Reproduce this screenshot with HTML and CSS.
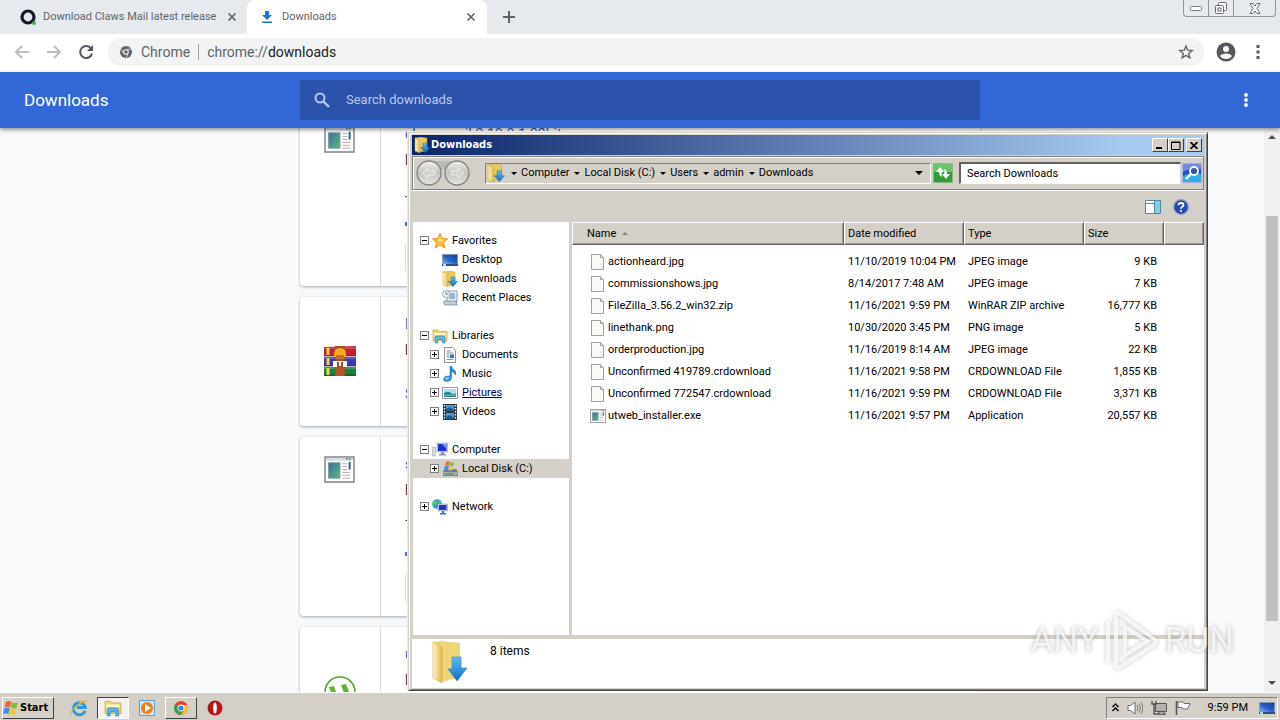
FILE: index.html
```html
<!DOCTYPE html>
<html lang="en">
<head>
<meta charset="utf-8">
<title>Downloads</title>
<link rel="stylesheet" href="styles.css">
</head>
<body>
<svg class="defs" aria-hidden="true">
  <defs>
    <linearGradient id="gFold" x1="0" x2="1"><stop offset="0" stop-color="#fff6c0"/><stop offset="1" stop-color="#e3b949"/></linearGradient>
    <linearGradient id="gBlue" x1="0" x2="0" y1="0" y2="1"><stop offset="0" stop-color="#5cc0f5"/><stop offset="1" stop-color="#0c6cc4"/></linearGradient>
    <linearGradient id="gScreen" x1="0" x2="1" y1="1" y2="0"><stop offset="0" stop-color="#6db7ee"/><stop offset=".45" stop-color="#2a62c8"/><stop offset="1" stop-color="#16399a"/></linearGradient>
    <linearGradient id="gExe" x1="0" x2="1" y1="0" y2="1"><stop offset="0" stop-color="#3d6f9c"/><stop offset="1" stop-color="#5cb878"/></linearGradient>
    <linearGradient id="gNav" x1="0" x2="0" y1="0" y2="1"><stop offset="0" stop-color="#f0f0ee"/><stop offset=".5" stop-color="#c2c2bf"/><stop offset="1" stop-color="#e6e6e3"/></linearGradient>
  </defs>
  <symbol id="folder-down" viewBox="0 0 16 16"><path d="M1 1l5-1 7 1v13l-8 1z" fill="#ecc95c" stroke="#c69b32" stroke-width=".5"/><path d="M1 1l5 2v13l-5-2z" fill="url(#gFold)" stroke="#cfa63c" stroke-width=".5"/><path d="M9 6h4v4.500h2.500L11 15.500 6.500 10.500H9z" fill="url(#gBlue)" stroke="#1b6fb8" stroke-width=".5"/></symbol>
  <symbol id="folder-lib" viewBox="0 0 16 16"><path d="M1 2h5l1 1.500h8V13H1z" fill="#f2d675" stroke="#c9a13a" stroke-width=".7"/><path d="M2 5h12v2H2z" fill="#fff7cf"/><path d="M3 15v-5q0-2 2-2h6q2 0 2 2v5h-2.500v-3.500h-5V15z" fill="#57b4ea" stroke="#2980bd" stroke-width=".6"/></symbol>
  <symbol id="star" viewBox="0 0 16 16"><path d="M8 .5l2.200 5 5.300.4-4 3.600 1.300 5.500L8 12l-4.800 3 1.300-5.500-4-3.600 5.300-.4z" fill="#fdbf35" stroke="#e08a17" stroke-width=".9"/><path d="M8 2.500l1.300 4 3.700.3-5 1.700-3-1.500 2-.5z" fill="#ffe48c"/></symbol>
  <symbol id="desktop" viewBox="0 0 16 16"><path d="M0 2h16v12H0z" fill="#9aa7b5"/><path d="M.8 2.800h14.400v9H.8z" fill="url(#gScreen)"/><path d="M0 12h16v2H0z" fill="#2a4f86"/><path d="M1 12h3v2H1z" fill="#a9dcf5"/></symbol>
  <symbol id="recent" viewBox="0 0 16 16"><path d="M5 1h10v11H5z" fill="#e9f0f6" stroke="#71879b" stroke-width=".8"/><path d="M2 11h12l1 4H3q-2-1-1-4z" fill="#c2cfda" stroke="#6e8194" stroke-width=".7"/><circle cx="4" cy="4" r="3.500" fill="#f4f6f8" stroke="#8b98a5" stroke-width=".8"/><path d="M4 2v2h2M8 4h5M8 6h5M7 8h6" stroke="#3f7fb6" fill="none"/></symbol>
  <symbol id="doc" viewBox="0 0 16 16"><path d="M2.500.5h8l3 3v12h-11z" fill="#fff" stroke="#8c949c"/><path d="M4.500 4h4M4.500 6h7M4.500 8h3M4.500 10h3M4.500 12.500h7" stroke="#7d8fa3"/><path d="M8 7.500h4V11H8z" fill="#2f74b5"/></symbol>
  <symbol id="music" viewBox="0 0 16 16"><path d="M8 0h1.500q.5 3 3 4 2 1.500 1 5-1-3-4-3.500V12q0 3-4 3.500-4 0-4-2.500.5-3 4.500-3 1 0 2 .3z" fill="#2f93dc" stroke="#1769ae" stroke-width=".5"/><ellipse cx="5" cy="12.500" rx="1.800" ry="1" fill="#a6dcfa"/></symbol>
  <symbol id="picture" viewBox="0 0 16 16"><path d="M.5 2.500h15v11H.5z" fill="#fff" stroke="#8d99a3"/><path d="M2 4h12v8H2z" fill="#a6dcf5"/><path d="M2 8q4-2 7 0t5 0v4H2z" fill="#2f8079"/><path d="M2 9.500h12V11H2z" fill="#56b4d3"/></symbol>
  <symbol id="video" viewBox="0 0 16 16"><path d="M1 0h14v16H1z" fill="#32363b"/><path d="M4 1h8v6H4zM4 9h8v6H4z" fill="#4d9bd6"/><path d="M4 5l4-2 4 3v1H4zM4 13l4-2 4 3v1H4z" fill="#1d5b97"/><path d="M2.500 1v15M13.500 1v15" stroke="#fff" stroke-width="1.300" stroke-dasharray="1.500 1.500"/></symbol>
  <symbol id="computer" viewBox="0 0 16 16"><path d="M5 1h10.500v9H5z" fill="#cfd6dd" stroke="#8d97a2" stroke-width=".6"/><path d="M6 2h8.500v7H6z" fill="#1c32c4"/><path d="M10 2h4.500v5z" fill="#7b98f2"/><path d="M9 10h3v2h2v1.500H7V12h2z" fill="#8b96a5"/><path d="M.7 5h2.600v9H.7z" fill="#e0e3e6" stroke="#8e959c" stroke-width=".6"/></symbol>
  <symbol id="disk" viewBox="0 0 16 16"><path d="M1 10l2-2h11l2 3v4H1z" fill="#71808a"/><path d="M1.500 11h14v3h-14z" fill="#a3aeb5"/><path d="M3 12h9v1.500H3z" fill="#49a35f"/><path d="M4 1q2-1.500 4 0L7 4.500q-2-1-4 0z" fill="#ef6a2f"/><path d="M8.500 1q2 1.200 4 0l-1 3.500q-2 1-4 0z" fill="#83c043"/><path d="M3 5q2-1 4 0L6 8.500q-2-1-4 0z" fill="#3f93dd"/><path d="M7.500 5.200q2 1.200 4 0l-1 3.500q-2 1-4 0z" fill="#fbc52d"/></symbol>
  <symbol id="network" viewBox="0 0 16 16"><circle cx="5" cy="5" r="4.800" fill="#2f9ed8"/><path d="M2 2q3-1 3 1T2 6 1 3zM6 1l3 2-2 2z" fill="#60c55d"/><path d="M6 5h9.500v7H6z" fill="#d3dae2" stroke="#7d8ea6" stroke-width=".6"/><path d="M7 6h7.500v5H7z" fill="#1d36cc"/><path d="M10 12h2v2h2v1.500H8V14h2z" fill="#3c6fc2"/></symbol>
  <symbol id="flag" viewBox="0 0 16 16"><path d="M3 2q3-1.800 5.300 0L7 7.500Q4.500 6 1.500 7.500z" fill="#f0642b"/><path d="M9 2.300q3 1.500 6 0L13.500 8q-3 1.200-5.800-.3z" fill="#7fbd3c"/><path d="M1.200 8.500q3-1.500 5.500 0L5.400 14Q3 12.500 0 14z" fill="#3a8fe0"/><path d="M7.400 8.800q3 1.500 6 0L12 14.300q-3 1.300-5.800-.2z" fill="#fcc42a"/></symbol>
  <symbol id="page" viewBox="0 0 16 16"><path d="M1.500.5h9l3 3v12h-12z" fill="#f9f9f8" stroke="#a09f9d"/><path d="M10.500.5v3h3" fill="#dcdcda" stroke="#a09f9d"/></symbol>
  <symbol id="exe" viewBox="0 0 32 28"><path d="M1 1h30v26H1z" fill="#fdfdfd" stroke="#7d8389" stroke-width="1.500"/><path d="M2 2h28v3H2z" fill="#d9dde0"/><path d="M23 3h1.500M26 3h1.500" stroke="#33475b" stroke-width="1.500"/><path d="M4.500 7h12v16h-12z" fill="url(#gExe)" stroke="#7f9aa8"/><path d="M19 8h5M19 11h5M19 14h5M19 17h8M19 20h8M19 23h8" stroke="#b5a9ae"/><path d="M26.500 6v8" stroke="#1f6678" stroke-width="2"/></symbol>
  <symbol id="rar" viewBox="0 0 32 30"><path d="M0 1l32-1v10H0z" fill="#c51f35"/><path d="M0 11h32v9H0z" fill="#3d39bb"/><path d="M0 21h32v9H0z" fill="#1a8238"/><path d="M0 2h32M0 12h32M0 22h32" stroke="#fff" stroke-opacity=".35"/><path d="M0 10h32M0 20h32M0 29h32" stroke="#1d1b2c" stroke-opacity=".6"/><path d="M4 2v7M4 12v7M4 22v7" stroke="#f5d23e" stroke-width="3"/><path d="M11 0h10v30H11z" fill="#a24f2a"/><path d="M10 8q0-6 6-6t6 6v3H10z" fill="#f3ab1c"/><path d="M12 9h8v4h-8z" fill="#c86d25"/><path d="M9 15h14v6h-4v-5h-2v4h-2v-4h-2v5H9z" fill="#fff"/><path d="M12 21h8v9h-8z" fill="#b4532c"/></symbol>
  <symbol id="chrome" viewBox="0 0 16 16"><circle cx="8" cy="8" r="7" fill="#e8402f"/><path d="M8 8L1.900 4.500A7 7 0 0 0 8 15l3-5.300z" fill="#31a452"/><path d="M8 8h0l3 1.800L8 15a7 7 0 0 0 6.300-10H8z" fill="#fbc41e"/><circle cx="8" cy="8" r="3.400" fill="#fff"/><circle cx="8" cy="8" r="2.600" fill="#3e7fe8"/></symbol>
</svg>

<div class="desktop">
  <main class="browser">
    <div class="tabstrip">
      <div class="tab">
        <svg class="i16" viewBox="0 0 16 16"><circle cx="8" cy="8" r="6" fill="none" stroke="#15182a" stroke-width="3.200"/><circle cx="14" cy="14" r="2" fill="#35b34a"/></svg>
        <span class="tab-title">Download Claws Mail latest release</span>
        <button class="plain" aria-label="Close tab"><svg class="i10" viewBox="0 0 10 10"><path d="M1.500 1.500l7 7M8.500 1.500l-7 7" stroke="#5f6368" stroke-width="1.700"/></svg></button>
      </div>
      <div class="tab active">
        <svg class="i16" viewBox="0 0 16 16"><path d="M6 2h4v4h3L8 11 3 6h3zM3 12.500h10V14H3z" fill="#1a73e8"/></svg>
        <span class="tab-title">Downloads</span>
        <button class="plain" aria-label="Close tab"><svg class="i10" viewBox="0 0 10 10"><path d="M1.500 1.500l7 7M8.500 1.500l-7 7" stroke="#5f6368" stroke-width="1.700"/></svg></button>
      </div>
      <button class="plain new-tab" aria-label="New tab"><svg class="i12" viewBox="0 0 12 12"><path d="M6 0v12M0 6h12" stroke="#5f6368" stroke-width="2"/></svg></button>
      <div class="winctl">
        <button aria-label="Minimize"><svg width="12" height="5" viewBox="0 0 12 5"><rect x=".5" y=".5" width="11" height="4" rx="1" fill="#fff" stroke="#777c84"/></svg></button>
        <button aria-label="Restore"><svg width="14" height="13" viewBox="0 0 14 13"><rect x="4.500" y=".5" width="8" height="8" rx="1" fill="#fff" stroke="#666b73"/><rect x="1.500" y="3.500" width="8" height="8" rx="1" fill="#fff" stroke="#666b73"/><rect x="4" y="6" width="3" height="3" fill="#fff" stroke="#666b73"/></svg></button>
        <button class="wide" aria-label="Close"><svg width="12" height="11" viewBox="0 0 12 11"><path d="M1 .5h3l2 2.500 2-2.500h3L8 5.500l3 5H8L6 8l-2 2.500H1l3-5z" fill="#fff" stroke="#666b73"/></svg></button>
      </div>
    </div>
    <div class="toolbar">
      <button class="plain" aria-label="Back"><svg class="i16" viewBox="0 0 16 16"><path d="M15 8H2M8 2L2 8l6 6" fill="none" stroke="#babcbe" stroke-width="2"/></svg></button>
      <button class="plain" aria-label="Forward"><svg class="i16" viewBox="0 0 16 16"><path d="M1 8h13M8 2l6 6-6 6" fill="none" stroke="#babcbe" stroke-width="2"/></svg></button>
      <button class="plain" aria-label="Reload"><svg class="i16" viewBox="0 0 16 16"><path d="M13 4.500A6 6 0 1 0 14 9.500" fill="none" stroke="#54585d" stroke-width="2"/><path d="M15 1v6H9z" fill="#54585d"/></svg></button>
      <div class="omnibox">
        <svg class="i12" viewBox="0 0 12 12"><circle cx="6" cy="6" r="6" fill="#5f6368"/><circle cx="6" cy="6" r="2.300" fill="#5f6368" stroke="#eef0f2" stroke-width="1.100"/><path d="M6 3.300h5.300M3.500 7.300L1 3M8.300 7.300L6 11.500" stroke="#eef0f2" stroke-width=".8"/></svg>
        <span class="site">Chrome</span><span class="bar"></span>
        <span class="url">chrome://<b>downloads</b></span>
        <button class="plain" aria-label="Bookmark"><svg class="i16" viewBox="0 0 16 16"><path d="M8 2l1.700 4.200 4.500.3-3.500 2.900 1.200 4.400L8 11.400l-3.900 2.400 1.200-4.400-3.500-2.900 4.500-.3z" fill="none" stroke="#5f6368" stroke-width="1.400"/></svg></button>
      </div>
      <button class="plain" aria-label="Profile"><svg width="20" height="20" viewBox="0 0 20 20"><circle cx="10" cy="10" r="9.500" fill="#54585d"/><circle cx="10" cy="7" r="3" fill="#fff"/><path d="M4 14q1.500-2.600 6-2.600t6 2.600q-2 3-6 3t-6-3z" fill="#fff"/></svg></button>
      <button class="plain menu" aria-label="Menu"><svg width="4" height="14" viewBox="0 0 4 14"><path d="M.5 0h3v3h-3zM.5 5.500h3v3h-3zM.5 11h3v3h-3z" fill="#54585d"/></svg></button>
    </div>
    <header class="app-head">
      <h1>Downloads</h1>
      <label class="app-search"><svg class="i16" viewBox="0 0 16 16"><circle cx="6" cy="6" r="4.500" fill="none" stroke="#b9c9f0" stroke-width="2"/><path d="M9.500 9.500L15 15" stroke="#b9c9f0" stroke-width="2.400"/></svg><input type="text" placeholder="Search downloads" aria-label="Search downloads"></label>
      <button class="plain more" aria-label="More actions"><svg width="4" height="14" viewBox="0 0 4 14"><circle cx="2" cy="2" r="1.900" fill="#fff"/><circle cx="2" cy="7" r="1.900" fill="#fff"/><circle cx="2" cy="12" r="1.900" fill="#fff"/></svg></button>
    </header>
    <div class="page">
      <div class="cards">
        <article class="card">
          <div class="thumb"><svg width="31" height="27"><use href="#exe"/></svg></div>
          <div class="info"><a href="#">claws-mail-3.19.0-1-32bit.exe</a><p>h</p><p class="state">-</p><i class="prog"></i><button>P</button></div>
        </article>
        <article class="card short">
          <div class="thumb rar"><svg width="32" height="30"><use href="#rar"/></svg></div>
          <div class="info"><a href="#">F</a><p>h</p><a class="show" href="#">S</a></div>
        </article>
        <article class="card">
          <div class="thumb"><svg width="31" height="27"><use href="#exe"/></svg></div>
          <div class="info"><a href="#">s</a><p>h</p><p class="state">7</p><i class="prog"></i><button>P</button></div>
        </article>
        <article class="card">
          <div class="thumb ut"><svg width="32" height="32" viewBox="0 0 32 32"><circle cx="16" cy="16" r="15" fill="#fff" stroke="#4da32f" stroke-width="1.500"/><path d="M5 11l5-1 3 9q2 4 6 2 2-1 1-4l-3-8 5-1 5 13-5 2q-8 5-13-1z" fill="#63b32e"/></svg></div>
          <div class="info"><a href="#">u</a><p>h</p></div>
        </article>
      </div>
      <div class="scroll"><svg width="8" height="4" viewBox="0 0 8 4"><path d="M0 4l4-4 4 4z" fill="#505050"/></svg><div class="track"><div class="thumbbar"></div></div><svg width="8" height="4" viewBox="0 0 8 4"><path d="M0 0l4 4 4-4z" fill="#505050"/></svg></div>
    </div>
  </main>

  <section class="win" aria-label="Downloads folder">
    <div class="titlebar"><svg class="i16"><use href="#folder-down"/></svg><strong>Downloads</strong>
      <button aria-label="Minimize"><svg width="8" height="8"><path d="M0 6h6v2H0z"/></svg></button><button aria-label="Maximize"><svg width="10" height="9"><path d="M.5 1h8.500v7.500H.5zM.5 1.500H9" fill="none" stroke="#000"/></svg></button><button class="x" aria-label="Close"><svg width="8" height="7" viewBox="0 0 8 7"><path d="M.5 0l7 7M7.500 0l-7 7" stroke="#000" stroke-width="1.600"/></svg></button>
    </div>
    <div class="navbar">
      <svg class="navs" width="54" height="26" viewBox="0 0 54 26"><path d="M13 1h28v9H13z" fill="#bbb9b4"/><circle cx="13" cy="13" r="12" fill="url(#gNav)" stroke="#85837f" stroke-width="1.300"/><circle cx="41" cy="13" r="12" fill="url(#gNav)" stroke="#85837f" stroke-width="1.300"/><path d="M6 13l6-5v3h7v4h-7v3zM48 13l-6-5v3h-7v4h7v3z" fill="#d2d2d0" stroke="#ececea"/></svg>
      <nav class="crumbs"><svg class="i20"><use href="#folder-down"/></svg><span class="arr"></span><a href="#">Computer</a><span class="arr"></span><a href="#">Local Disk (C:)</a><span class="arr"></span><a href="#">Users</a><span class="arr"></span><a href="#">admin</a><span class="arr"></span><a href="#">Downloads</a><span class="arr big"></span></nav>
      <button class="plain" aria-label="Refresh"><svg width="20" height="20" viewBox="0 0 20 20"><path d="M.5.5h19v19H.5z" fill="#2f9c36" stroke="#86b987"/><path d="M1 1h18v8H1z" fill="#6cc46b"/><path d="M7 4L3 9h3q0 4 3 5-1-3 0-5h2zM13 16l4-5h-3q0-4-3-5 1 3 0 5H9z" fill="#fff"/></svg></button>
      <input class="wsearch" type="text" value="Search Downloads" aria-label="Search Downloads">
      <button class="plain go" aria-label="Search"><svg width="20" height="20" viewBox="0 0 20 20"><path d="M.5.5h19v19H.5z" fill="#1f52c8" stroke="#a5b0e2"/><path d="M1 13q9-5 18-2v8H1z" fill="#31b0e4"/><path d="M1 1h18v5Q9 4 1 9z" fill="#7289e6"/><circle cx="12" cy="8" r="4" fill="#2a56ba" stroke="#fff" stroke-width="1.800"/><path d="M9 11l-5 5" stroke="#fff" stroke-width="2.400"/></svg></button>
    </div>
    <div class="cmdbar">
      <button class="plain" aria-label="Preview pane"><svg class="i16" viewBox="0 0 16 16"><path d="M.5 1.500h15v13H.5z" fill="#fff" stroke="#4c89a6"/><path d="M10 2h5v12h-5z" fill="#7fd0dc"/><path d="M1 4.500h9M9.500 2v12" stroke="#4c89a6"/></svg></button>
      <button class="plain" aria-label="Help"><svg class="i16" viewBox="0 0 16 16"><circle cx="8" cy="8" r="7.300" fill="#2549b4" stroke="#8d9bc4" stroke-width="1.200"/><path d="M5.500 6.200Q5.500 4 8 4t2.500 2q0 1-1.300 1.700T8 9.800" fill="none" stroke="#fff" stroke-width="1.800"/><circle cx="8" cy="12" r="1.100" fill="#fff"/></svg></button>
    </div>
    <div class="panes">
      <ul class="tree">
        <li><button class="exp minus" aria-label="Collapse"></button><svg class="i16"><use href="#star"/></svg>Favorites</li>
        <li class="leaf"><svg class="i16"><use href="#desktop"/></svg>Desktop</li>
        <li class="leaf"><svg class="i16"><use href="#folder-down"/></svg>Downloads</li>
        <li class="leaf"><svg class="i16"><use href="#recent"/></svg>Recent Places</li>
        <li class="group"><button class="exp minus" aria-label="Collapse"></button><svg class="i16"><use href="#folder-lib"/></svg>Libraries</li>
        <li class="sub"><button class="exp" aria-label="Expand"></button><svg class="i16"><use href="#doc"/></svg>Documents</li>
        <li class="sub"><button class="exp" aria-label="Expand"></button><svg class="i16"><use href="#music"/></svg>Music</li>
        <li class="sub"><button class="exp" aria-label="Expand"></button><svg class="i16"><use href="#picture"/></svg><a href="#">Pictures</a></li>
        <li class="sub"><button class="exp" aria-label="Expand"></button><svg class="i16"><use href="#video"/></svg>Videos</li>
        <li class="group"><button class="exp minus" aria-label="Collapse"></button><svg class="i16"><use href="#computer"/></svg>Computer</li>
        <li class="sub sel"><button class="exp" aria-label="Expand"></button><svg class="i16"><use href="#disk"/></svg>Local Disk (C:)</li>
        <li class="group"><button class="exp" aria-label="Expand"></button><svg class="i16"><use href="#network"/></svg>Network</li>
      </ul>
      <div class="files">
        <table>
          <colgroup><col class="c-name"><col class="c-mid"><col class="c-mid"><col class="c-size"><col></colgroup>
          <thead><tr><th class="first">Name <span class="sort"></span></th><th>Date modified</th><th>Type</th><th>Size</th><th></th></tr></thead>
          <tbody>
            <tr><td><svg class="i16"><use href="#page"/></svg>actionheard.jpg</td><td>11/10/2019 10:04 PM</td><td>JPEG image</td><td>9 KB</td></tr>
            <tr><td><svg class="i16"><use href="#page"/></svg>commissionshows.jpg</td><td>8/14/2017 7:48 AM</td><td>JPEG image</td><td>7 KB</td></tr>
            <tr><td><svg class="i16"><use href="#page"/></svg>FileZilla_3.56.2_win32.zip</td><td>11/16/2021 9:59 PM</td><td>WinRAR ZIP archive</td><td>16,777 KB</td></tr>
            <tr><td><svg class="i16"><use href="#page"/></svg>linethank.png</td><td>10/30/2020 3:45 PM</td><td>PNG image</td><td>5 KB</td></tr>
            <tr><td><svg class="i16"><use href="#page"/></svg>orderproduction.jpg</td><td>11/16/2019 8:14 AM</td><td>JPEG image</td><td>22 KB</td></tr>
            <tr><td><svg class="i16"><use href="#page"/></svg>Unconfirmed 419789.crdownload</td><td>11/16/2021 9:58 PM</td><td>CRDOWNLOAD File</td><td>1,855 KB</td></tr>
            <tr><td><svg class="i16"><use href="#page"/></svg>Unconfirmed 772547.crdownload</td><td>11/16/2021 9:59 PM</td><td>CRDOWNLOAD File</td><td>3,371 KB</td></tr>
            <tr><td><svg class="i16"><use href="#exe"/></svg>utweb_installer.exe</td><td>11/16/2021 9:57 PM</td><td>Application</td><td>20,557 KB</td></tr>
          </tbody>
        </table>
      </div>
    </div>
    <div class="details"><svg width="36" height="42" viewBox="0 0 36 42"><path d="M1 1l8-1 19 2v34L10 41z" fill="#efd478"/><path d="M1 1l9 5v36l-9-5z" fill="url(#gFold)" stroke="#d3ad4b" stroke-width=".6"/><path d="M20 16h9v11h6L25 40 16 28h4z" fill="url(#gBlue)" stroke="#3a8fd0" stroke-width=".7"/></svg><span>8 items</span></div>
  </section>

  <div class="mark" aria-hidden="true"><span>ANY</span><svg width="60" height="64" viewBox="0 0 60 64"><path d="M6 12v42M14 6v50q0 4 4 2l34-22q4-3 0-6L18 5q-4-2-4 1M23 18v28l22-14z" fill="none" stroke="#fff" stroke-opacity=".75" stroke-width="4"/></svg><span>RUN</span></div>

  <footer class="taskbar">
    <button class="start"><svg class="i16"><use href="#flag"/></svg>Start</button>
    <button class="task" aria-label="Internet Explorer"><svg class="i18" viewBox="0 0 18 18"><path d="M15 12a6 6 0 1 1 .3-3.500H7" fill="none" stroke="#2e9ade" stroke-width="3"/><path d="M2 16Q-1 12 8 6t9-3q-1-3-8 1" fill="none" stroke="#e7b62c" stroke-width="1.300"/></svg></button>
    <button class="task down" aria-label="Windows Explorer"><svg class="i18"><use href="#folder-lib"/></svg></button>
    <button class="task" aria-label="Media Player"><svg class="i18" viewBox="0 0 18 18"><path d="M1.500 1.500h15v15h-15z" fill="#cfe6f8" stroke="#5a9fd4"/><circle cx="9" cy="9" r="6" fill="#ef7f1a"/><path d="M7 5l6 4-6 4z" fill="#fff"/></svg></button>
    <button class="task up" aria-label="Chrome"><svg class="i16"><use href="#chrome"/></svg></button>
    <button class="task" aria-label="Opera"><svg class="i16" viewBox="0 0 16 16"><circle cx="8" cy="8" r="7.500" fill="#b8161c"/><ellipse cx="8" cy="8" rx="1.800" ry="5.500" fill="#fff"/></svg></button>
    <div class="tray">
      <svg width="7" height="9" viewBox="0 0 7 9"><path d="M.5 4l3-3 3 3M.5 8l3-3 3 3" fill="none" stroke="#000" stroke-width="1.400"/></svg>
      <svg class="i16" viewBox="0 0 16 16"><path d="M1 5.500h2.500L8 2v12l-4.500-3.500H1z" fill="#fff" stroke="#6d6a66"/><path d="M10 5q2 3 0 6M12 3.500q3 4.500 0 9M14 2q3.500 6 0 12" fill="none" stroke="#7d7a75"/></svg>
      <svg class="i16" viewBox="0 0 16 16"><path d="M4.500 3.500h11v8h-11z" fill="#b4b1ab" stroke="#57544f"/><path d="M1 1v3h4V1M3 4v10h12" fill="none" stroke="#57544f" stroke-width="1.400"/><path d="M8 12h5v2H8z" fill="#fff" stroke="#57544f"/></svg>
      <svg class="i16" viewBox="0 0 16 16"><path d="M1.500 15V1" stroke="#57544f" stroke-width="1.600"/><path d="M3 2h5l1 1.500h6L12.500 9H8L7 7.500H3z" fill="#fff" stroke="#6d6a66"/></svg>
      <time>9:59 PM</time>
      <svg class="i16"><use href="#desktop"/></svg>
    </div>
  </footer>
</div>
</body>
</html>
```

FILE: styles.css
```css
* { box-sizing: border-box; }
body { margin: 0; font: 11px/14px "Roboto", "Liberation Sans", sans-serif; color: #000; }
svg { display: block; flex: none; }
button { font: inherit; color: inherit; padding: 0; margin: 0; flex: none; }
a { color: inherit; text-decoration: none; }
.defs { position: absolute; width: 0; height: 0; }
.plain { border: 0; background: none; display: block; }
.i10 { width: 10px; height: 10px; }
.i12 { width: 12px; height: 12px; }
.i16 { width: 16px; height: 16px; }
.i18 { width: 18px; height: 18px; }
.i20 { width: 20px; height: 18px; }

.desktop { height: 100vh; display: flex; flex-direction: column; position: relative; overflow: hidden; }
.browser { flex: 1; min-height: 0; display: flex; flex-direction: column; }

.tabstrip { display: flex; height: 34px; background: #e6eaee; align-items: center; flex: none; }
.tab { display: flex; align-items: center; gap: 7px; height: 34px; padding: 0 10px 0 20px; flex: 0 1 247px; min-width: 0; color: #5f6368; }
.tab-title { flex: 1; white-space: nowrap; }
.tab.active { background: #fff; border-radius: 8px 8px 0 0; flex-basis: 240px; padding: 0 11px 0 12px; }
.new-tab { margin-left: 16px; }
.winctl { margin: 0 4px 0 auto; align-self: flex-start; display: flex; border: 1px solid #8f959c; border-top: 0; border-radius: 0 0 4px 4px; }
.winctl button { width: 25px; height: 16px; border: 0; border-right: 1px solid #8f959c; background: none; display: flex; align-items: center; justify-content: center; }
.winctl .wide { width: 41px; border: 0; }

.toolbar { display: flex; height: 38px; padding: 0 20px 2px 14px; gap: 16px; align-items: center; background: #fff; flex: none; }
.menu { margin-left: 4px; }
.omnibox { flex: 1; display: flex; align-items: center; height: 28px; margin: 0 -4px 0 -2px; padding: 0 10px 0 12px; border-radius: 14px; background: #f1f3f4; font-size: 14px; color: #5f6368; }
.site { margin-left: 9px; }
.bar { width: 1px; height: 16px; margin: 0 8px; background: #9aa0a6; }
.url { flex: 1; }
.url b { font-weight: 400; color: #202124; }

.app-head { display: grid; grid-template-columns: 1fr minmax(0, 680px) 1fr; height: 56px; align-items: center; background: #3367d6; flex: none; position: relative; box-shadow: 0 2px 4px rgba(0, 0, 0, .4); }
h1 { margin: 0; padding-left: 24px; font-size: 17px; line-height: 24px; font-weight: 400; color: #fff; }
.app-search { display: flex; align-items: center; gap: 16px; height: 40px; padding-left: 14px; background: #2a52ab; }
.app-search input { flex: 1; border: 0; padding: 0; background: none; font: 13px/20px "Roboto", sans-serif; color: #fff; outline: 0; }
.app-search input::placeholder { color: #b9c9f0; opacity: 1; }
.more { justify-self: end; margin-right: 32px; }

.page { flex: 1; min-height: 0; display: flex; background: #f7f9fb; overflow: hidden; }
.cards { flex: 1; padding-left: 16px; margin-top: -21px; display: flex; flex-direction: column; align-items: center; gap: 11px; }
.card { width: 100%; max-width: 680px; min-height: 179px; flex: none; display: flex; background: #fff; border-radius: 4px; box-shadow: 0 1px 3px rgba(60, 64, 67, .45); }
.card.short { min-height: 129px; }
.thumb { width: 81px; border-right: 1px solid #dadce0; padding: 19px 0 0 24px; }
.thumb.rar, .thumb.ut { padding-top: 49px; }
.info { display: flex; flex-direction: column; align-items: flex-start; padding: 17px 0 12px 24px; font-size: 14px; line-height: 20px; }
.info a { color: #2a5cc4; }
.info p { margin: 6px 0 0; color: #333; }
.info .state { margin-top: 16px; }
.info .show { margin-top: 24px; }
.prog { width: 300px; height: 4px; margin-top: 16px; background: #3c78c8; }
.info button { width: 72px; height: 32px; margin-top: 16px; border: 1px solid #dadce0; border-radius: 4px; background: #fff; color: #2a5cc4; }
.scroll { width: 16px; display: flex; flex-direction: column; align-items: center; padding: 7px 0; background: #f1f1f1; }
.track { flex: 1; width: 12px; margin: 4px 0; padding: 73px 0 56px; display: flex; }
.thumbbar { flex: 1; background: #c1c1c1; }

.win { position: absolute; left: 408px; right: 72px; top: 132px; bottom: 29px; display: flex; flex-direction: column; padding: 2px 3px 2px 2px; background: #d4d0c8; border: 1px solid; border-color: #d4d0c8 #404040 #404040 #d4d0c8; box-shadow: inset 1px 1px #fff, inset -1px -1px #808080, -1px -1px #ece9e4; }
.titlebar { display: flex; align-items: center; height: 20px; margin-left: 1px; padding: 0 2px; background: linear-gradient(90deg, #0a246a, #a6caf0 90%); flex: none; }
.titlebar strong { flex: 1; padding-left: 1px; color: #fff; font: bold 11px/14px "DejaVu Sans Condensed", "DejaVu Sans", sans-serif; }
.titlebar button { width: 16px; height: 14px; display: flex; align-items: center; justify-content: center; background: #d4d0c8; border: 1px solid; border-color: #fff #404040 #404040 #fff; }
.titlebar .x { margin-left: 2px; }
.navbar { display: flex; align-items: center; height: 34px; margin: 1px 0 0 1px; padding: 0 1px 0 3px; border: 1px solid #808080; box-shadow: 0 1px #fff, inset 1px 1px #fff; flex: none; }
.crumbs { flex: 1; display: flex; align-items: center; height: 21px; margin: 0 2px 0 15px; padding-right: 7px; border: 1px solid; border-color: #808080 #fff #fff #808080; white-space: nowrap; }
.crumbs a { padding: 0 5px 0 4px; }
.arr { flex: none; border: 3px solid transparent; border-top-color: #000; border-bottom: 0; }
.i20 + .arr { margin-left: 5px; }
.arr.big { margin-left: auto; border-width: 4px 4px 0; }
.wsearch { width: 222px; height: 22px; margin-left: 6px; padding: 0 6px; border: solid; border-color: #606060 #d4d0c8 #fff #606060; border-width: 2px 1px 1px 2px; background: #fff; font: inherit; outline: 0; border-radius: 0; }
.go { margin-left: 1px; }
.cmdbar { display: flex; align-items: center; justify-content: flex-end; gap: 12px; height: 31px; padding-right: 15px; margin-top: 1px; flex: none; }
.panes { flex: 1; min-height: 0; display: flex; }
.tree { width: 158px; margin: 0 3px 0 0; padding: 9px 0 0; list-style: none; background: #fff; flex: none; border-left: 2px solid #d4d0c8; }
.tree li { display: flex; align-items: center; height: 19px; padding-left: 7px; }
.tree li .i16 { margin: 0 4px 0 3px; }
.tree .sub { padding-left: 17px; }
.tree .leaf { padding-left: 26px; }
.tree .group { margin-top: 19px; }
.tree .sel { background: #d4d0c8; }
.tree a { color: #000080; text-decoration: underline; }
.exp { width: 9px; height: 9px; border: 1px solid #808080; background: linear-gradient(#000, #000) center / 5px 1px no-repeat, linear-gradient(#000, #000) center / 1px 5px no-repeat, #fff; }
.exp.minus { background: linear-gradient(#000, #000) center / 5px 1px no-repeat, #fff; }
.files { flex: 1; background: #fff; overflow: hidden; }
table { width: 100%; table-layout: fixed; border-collapse: separate; border-spacing: 0; }
.c-name { width: 272px; }
.c-mid { width: 120px; }
.c-size { width: 80px; }
th { height: 23px; padding: 0 3px; font-weight: 400; text-align: left; background: #d4d0c8; border: 1px solid; border-color: #fff #606060 #606060 #fff; box-shadow: inset -1px -1px #a09c94; }
th.first { padding-left: 14px; }
.sort { display: inline-block; vertical-align: 2px; margin-left: 3px; border: 3px solid transparent; border-bottom-color: #8a867e; border-top: 0; }
td { height: 22px; padding: 0 4px; white-space: nowrap; }
tbody::before { content: ""; display: block; height: 6px; }
td:first-child { padding-left: 18px; }
td .i16 { display: inline-block; vertical-align: middle; margin-right: 2px; }
td:nth-child(4) { text-align: right; padding-right: 7px; }
.details { display: flex; gap: 22px; height: 49px; margin: 4px 0 0 1px; padding: 2px 20px 0; background: #fff; font-size: 12px; line-height: 20px; flex: none; }

.mark { position: absolute; right: 46px; bottom: 47px; display: flex; align-items: center; gap: 3px; font: 35px/50px "Roboto", sans-serif; color: rgba(255, 255, 255, .75); text-shadow: 0 0 4px rgba(130, 130, 130, .6); }
.mark svg { filter: drop-shadow(0 0 2px rgba(130, 130, 130, .6)); }

.taskbar { display: flex; align-items: center; height: 28px; padding: 2px 2px 0; background: #d4d0c8; border-top: 1px solid #fff; flex: none; }
.start { display: flex; align-items: center; gap: 1px; width: 52px; height: 22px; border: 1px solid; border-color: #fff #404040 #404040 #fff; background: #d4d0c8; font: bold 11px/14px "DejaVu Sans Condensed", "DejaVu Sans", sans-serif; margin-right: 9px; }
.task { display: flex; align-items: center; justify-content: center; width: 32px; height: 22px; border: 1px solid transparent; background: none; margin-right: 2px; }
.task.down { background: #f4f2ee; border-color: #404040 #fff #fff #404040; }
.task.up { border-color: #fff #404040 #404040 #fff; }
.tray { display: flex; align-items: center; gap: 8px; height: 22px; margin-left: auto; padding: 0 2px 0 5px; border: 1px solid; border-color: #808080 #fff #fff #808080; }
.tray time { margin: 0 3px 0 9px; }
```
